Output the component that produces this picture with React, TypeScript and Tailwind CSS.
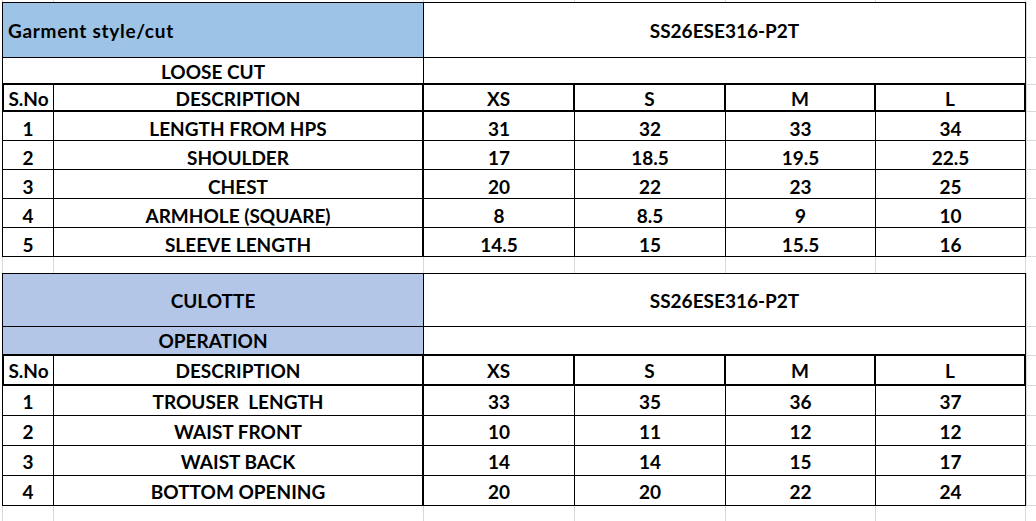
const grid = "border-[#d9d9d9]";
const txt = "font-['Lato',sans-serif] font-bold text-[19px] leading-none text-black";

const looseCut = [
  ["1", "LENGTH FROM HPS", "31", "32", "33", "34"],
  ["2", "SHOULDER", "17", "18.5", "19.5", "22.5"],
  ["3", "CHEST", "20", "22", "23", "25"],
  ["4", "ARMHOLE (SQUARE)", "8", "8.5", "9", "10"],
  ["5", "SLEEVE LENGTH", "14.5", "15", "15.5", "16"],
];

const culotte = [
  ["1", "TROUSER\u00a0 LENGTH", "33", "35", "36", "37"],
  ["2", "WAIST FRONT", "10", "11", "12", "12"],
  ["3", "WAIST BACK", "14", "14", "15", "17"],
  ["4", "BOTTOM OPENING", "20", "20", "22", "24"],
];

const widths = ["w-[52px]", "w-[370px]", "w-[151px]", "w-[151px]", "w-[150px]", "w-[150px]"];

// light excel gridline filler to the right of the sheet
function Strip() {
  return <div className={`flex-1 border-l border-b ${grid}`} />;
}

function GapRow({ h }: { h: string }) {
  return (
    <div className={`flex ${h}`}>
      {widths.map((w, i) => (
        <div key={i} className={`${w} shrink-0 border-r ${grid} ${i === 0 ? "border-l" : ""}`} />
      ))}
      <div className="flex-1" />
    </div>
  );
}

function HeaderRow({ h, pb }: { h: string; pb: string }) {
  const labels = ["S.No", "DESCRIPTION", "XS", "S", "M", "L"];
  return (
    <div className={`flex ${h}`}>
      {labels.map((l, i) => (
        <div
          key={l}
          className={`${widths[i]} shrink-0 flex items-end justify-center ${pb} border-black border-b-2 ${
            i === 0 ? "border-l-2 border-r" : "border-r-2"
          } ${txt}`}
        >
          {l}
        </div>
      ))}
      <Strip />
    </div>
  );
}

function DataRow({ row, h, pb }: { row: string[]; h: string; pb: string }) {
  return (
    <div className={`flex ${h}`}>
      {row.map((v, i) => (
        <div
          key={i}
          className={`${widths[i]} shrink-0 flex items-end justify-center ${pb} border-black border-b ${
            i === 0 ? "border-l" : ""
          } ${i === 1 ? "border-r-2" : "border-r"} ${txt} whitespace-pre`}
        >
          {v}
        </div>
      ))}
      <Strip />
    </div>
  );
}

export default function App() {
  return (
    <div className="w-[1036px] h-[521px] overflow-hidden bg-white">
      <div className="pl-[2px]">
        <GapRow h="h-[2px]" />

        {/* LOOSE CUT table */}
        <div className="flex h-[56px]">
          <div className={`w-[422px] shrink-0 bg-[#9dc3e6] border border-black flex items-center pl-[5px] pt-[1px] ${txt} tracking-[0.7px]`}>
            Garment style/cut
          </div>
          <div className={`w-[602px] shrink-0 border-t border-b border-r border-black flex items-center justify-center pt-[1px] ${txt}`}>
            SS26ESE316-P2T
          </div>
          <Strip />
        </div>
        <div className="flex h-[27px]">
          <div className={`w-[422px] shrink-0 border-l border-r border-b-2 border-black flex items-end justify-center pb-[2px] ${txt}`}>
            LOOSE CUT
          </div>
          <div className="w-[602px] shrink-0 border-r border-b-2 border-black" />
          <Strip />
        </div>
        <HeaderRow h="h-[27px]" pb="pb-[2px]" />
        {looseCut.map((r) => (
          <DataRow key={r[0]} row={r} h="h-[29px]" pb="pb-[2px]" />
        ))}

        <GapRow h="h-[16px]" />

        {/* CULOTTE table */}
        <div className="flex h-[54px]">
          <div className={`w-[422px] shrink-0 bg-[#b4c6e7] border border-black flex items-center justify-center pt-[1px] ${txt}`}>
            CULOTTE
          </div>
          <div className={`w-[602px] shrink-0 border-t border-b border-r border-black flex items-center justify-center pt-[1px] ${txt}`}>
            SS26ESE316-P2T
          </div>
          <Strip />
        </div>
        <div className="flex h-[29px]">
          <div className={`w-[422px] shrink-0 bg-[#b4c6e7] border-l border-r border-b-2 border-black flex items-end justify-center pb-[4px] ${txt}`}>
            OPERATION
          </div>
          <div className="w-[602px] shrink-0 border-r border-b-2 border-black" />
          <Strip />
        </div>
        <HeaderRow h="h-[30px]" pb="pb-[4px]" />
        {culotte.map((r) => (
          <DataRow key={r[0]} row={r} h="h-[30px]" pb="pb-[4px]" />
        ))}

        <GapRow h="h-[16px]" />
      </div>
    </div>
  );
}
